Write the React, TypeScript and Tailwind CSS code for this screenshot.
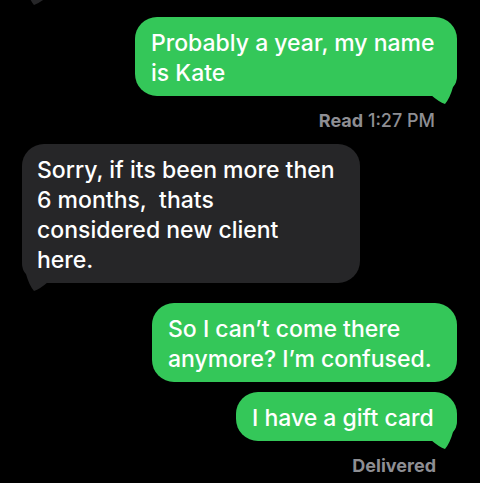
import React from "react";

const FONT = { fontFamily: "Inter, 'Noto Sans', sans-serif" };

function Tail({ color, side }: { color: string; side: "right" | "left" }) {
  return (
    <svg
      width="26"
      height="30"
      viewBox="0 0 26 30"
      className={
        side === "right"
          ? "absolute right-0 bottom-[-8px]"
          : "absolute left-0 bottom-[-8px] -scale-x-100"
      }
    >
      <path
        d="M26 0 C26 6 25 10 22 13 Q19 24 14 30 Q8 28 0 21 L0 0 Z"
        fill={color}
      />
    </svg>
  );
}

function Bubble({
  side,
  width,
  className,
  children,
  tail = true,
}: {
  side: "right" | "left";
  width: string;
  className?: string;
  children: React.ReactNode;
  tail?: boolean;
}) {
  const isRight = side === "right";
  const color = isRight ? "#34c759" : "#262628";
  return (
    <div
      className={`relative rounded-[22px] pt-[11px] pb-[8px] text-[23px] leading-[30px] font-medium text-white ${
        isRight
          ? "self-end mr-[23px] pl-[16px] pr-[18px] bg-[#34c759]"
          : "self-start ml-[22px] pl-[15px] pr-[14px] bg-[#262628]"
      } ${width} ${className ?? ""}`}
    >
      {tail && <Tail color={color} side={side} />}
      <div className="relative whitespace-nowrap">{children}</div>
    </div>
  );
}

export default function App() {
  return (
    <div
      className="w-[480px] h-[483px] bg-black overflow-hidden flex flex-col"
      style={FONT}
    >
      <Bubble side="left" width="w-[200px]" className="mt-[-52px] h-[49px]">
        {" "}
      </Bubble>

      <Bubble side="right" width="w-[322px]" className="mt-[20px]">
        Probably a year, my name
        <br />
        is Kate
      </Bubble>

      <div className="self-end mr-[45px] mt-[15px] text-[18px] leading-[20px] font-medium text-[#8e8e93]">
        <span className="font-bold">Read</span> 1:27 PM
      </div>

      <Bubble side="left" width="w-[338px]" className="mt-[13px]">
        Sorry, if its been more then
        <br />
        6 months,&nbsp; thats
        <br />
        considered new client
        <br />
        here.
      </Bubble>

      <Bubble side="right" width="w-[305px]" className="mt-[20px]" tail={false}>
        So I can’t come there
        <br />
        anymore? I’m confused.
      </Bubble>

      <Bubble side="right" width="w-[221px]" className="mt-[10px]">
        I have a gift card
      </Bubble>

      <div className="self-end mr-[44px] mt-[15px] text-[18px] leading-[20px] font-bold text-[#8e8e93]">
        Delivered
      </div>
    </div>
  );
}
